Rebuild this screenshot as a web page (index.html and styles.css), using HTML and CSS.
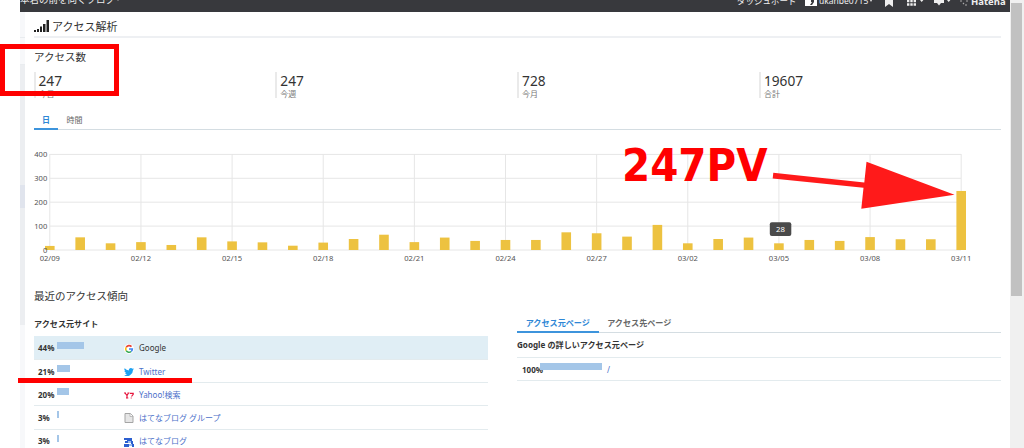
FILE: index.html
```html
<!DOCTYPE html>
<html lang="ja">
<head>
    <meta charset="UTF-8">
    <meta name="viewport" content="width=device-width, initial-scale=1.0">
    <title>アクセス解析</title>
    <link rel="stylesheet" href="styles.css">
</head>
<body>
    <div class="window">
        <div class="page">
            <!-- Global header -->
            <header class="global-header">
                <span class="blog-name">本君の前を向くブログ<i class="caret"></i></span>
                <nav class="global-menu">
                    <span class="dashboard">ダッシュボード</span>
                    <span class="user">
                        <svg class="user-icon" width="12" height="12" viewBox="0 0 12 12"><path d="M0 0H12V12H0Z" fill="#fff"/><path d="M2 0h3v6H2zM6 6h3v2L7 11H5l2-3H6z" fill="#38393d"/></svg>
                        <span>ukanbe0715<i class="caret"></i></span>
                    </span>
                    <svg class="bookmark" width="8" height="12" viewBox="0 0 8 12"><path d="M0 0H8V12L4 9L0 12Z" fill="#eee"/></svg>
                    <svg class="apps" width="17" height="12" viewBox="0 0 17 12"><path d="M0 1h2.4v2.6H0zM3.3 1h2.4v2.6H3.3zM6.6 1H9v2.6H6.6zM0 4.6h2.4v2.6H0zM3.3 4.6h2.4v2.6H3.3zM6.6 4.6H9v2.6H6.6zM0 8.2h2.4v2.6H0zM3.3 8.2h2.4v2.6H3.3zM6.6 8.2H9v2.6H6.6zM13 5h3.400l-1.700 2z" fill="#eee"/></svg>
                    <svg class="notice" width="17" height="12" viewBox="0 0 17 12"><path d="M0 0h10v8H7L5 10.500L3 8H0zM13 5h3.400l-1.700 2z" fill="#eee"/></svg>
                    <svg class="hatena-mark" width="10" height="12" viewBox="0 0 10 12"><path d="M0 6h2M3 9l1-1M6 6h2M5 10h2M8 4l2-1" stroke="#aaa" stroke-width="1.200"/></svg>
                    <span class="hatena">Hatena</span>
                </nav>
            </header>

            <div class="body">
                <aside class="sidebar">
                    <div class="side-light"></div>
                    <div class="side-mark"></div>
                    <div class="side-dark"></div>
                    <div class="side-current"></div>
                    <div class="side-dark side-rest"></div>
                </aside>

                <main class="main">
                    <h1 class="title">
                        <svg width="15" height="12" viewBox="0 0 15 12"><path d="M0 10h2v2H0zM3 9h2v3H3zM6 6.500h2v5.500H6zM9 4h2.500v8H9zM12.500 0H15v12h-2.500z" fill="#222"/></svg>
                        <span>アクセス解析</span>
                    </h1>

                    <section class="count">
                        <h2>アクセス数</h2>
                        <div class="stats">
                            <div class="stat"><div class="num">247</div><div class="label">今日</div></div>
                            <div class="stat"><div class="num">247</div><div class="label">今週</div></div>
                            <div class="stat"><div class="num">728</div><div class="label">今月</div></div>
                            <div class="stat"><div class="num">19607</div><div class="label">合計</div></div>
                        </div>
                    </section>

                    <div class="tabs day-tabs">
                        <span class="tab active">日</span>
                        <span class="tab">時間</span>
                    </div>

                    <svg class="chart" id="chart" width="967" height="146" viewBox="34 130 967 146"></svg>

                    <h2 class="trend-title">最近のアクセス傾向</h2>
                    <div class="trend">
                        <section class="sites">
                            <h3>アクセス元サイト</h3>
                            <div class="row selected">
                                <span class="rate">44%</span><span class="track"><span class="fill" style="width: 27px"></span></span>
                                <svg class="favicon" viewBox="-1 -1 12 12"><circle cx="5" cy="5" r="6" fill="#fff"/><g fill="none" stroke-width="1.900"><path d="M8 2.200A4 4 0 0 0 1.600 3" stroke="#ea4335"/><path d="M1.600 3a4 4 0 0 0 0 4" stroke="#fbbc05"/><path d="M1.600 7A4 4 0 0 0 7.600 8" stroke="#34a853"/><path d="M7.600 8A4 4 0 0 0 9 5H5" stroke="#4285f4"/></g></svg>
                                <span class="site">Google</span>
                            </div>
                            <div class="row">
                                <span class="rate">21%</span><span class="track"><span class="fill" style="width: 13px"></span></span>
                                <svg class="favicon" viewBox="0 0 24 24"><path d="M24 4.600a10 10 0 0 1-2.800.8 5 5 0 0 0 2.100-2.700 10 10 0 0 1-3.100 1.200 4.900 4.900 0 0 0-8.400 4.500A14 14 0 0 1 1.700 3.200a4.900 4.900 0 0 0 1.500 6.500 5 5 0 0 1-2.200-.6 4.900 4.900 0 0 0 3.900 4.900 5 5 0 0 1-2.200.1 4.900 4.900 0 0 0 4.600 3.400A10 10 0 0 1 0 19.500a14 14 0 0 0 21.500-12.400A10 10 0 0 0 24 4.600z" fill="#1da1f2"/></svg>
                                <span class="site link">Twitter</span>
                            </div>
                            <div class="row">
                                <span class="rate">20%</span><span class="track"><span class="fill" style="width: 12px"></span></span>
                                <svg class="favicon" viewBox="0 0 10 10"><path d="M0 3h2M3.500 3h2M1 3l2 2.500L4.500 3M3 5.500v2.500M2 8h2.300M6 3.300h3.200v1L7.500 6.500M6.700 8h1" fill="none" stroke="#e6143c" stroke-width="1.200"/></svg>
                                <span class="site link">Yahoo!検索</span>
                            </div>
                            <div class="row">
                                <span class="rate">3%</span><span class="track"><span class="fill" style="width: 2px"></span></span>
                                <svg class="favicon" viewBox="0 0 10 10"><path d="M1 .5h5.500L9 3v6.500H1z" fill="#e6e6e6" stroke="#a5a5a5"/><path d="M6 .5V3.500H9" fill="#fff" stroke="#a5a5a5" stroke-width=".7"/></svg>
                                <span class="site link">はてなブログ グループ</span>
                            </div>
                            <div class="row">
                                <span class="rate">3%</span><span class="track"><span class="fill" style="width: 2px"></span></span>
                                <svg class="favicon" viewBox="0 0 10 10"><path d="M0 1h3v2H0zM3 1h5v3H3zM1 4h3v2H1zM7 4h2v3H7zM0 7h5v3H0zM8 7h2v3H8z" fill="#2c5fd0"/><path d="M4 4h3v2H4zM5 7h3v2H5z" fill="#9dbbed"/></svg>
                                <span class="site link">はてなブログ</span>
                            </div>
                        </section>

                        <section class="pages">
                            <div class="tabs page-tabs">
                                <span class="tab active">アクセス元ページ</span>
                                <span class="tab">アクセス先ページ</span>
                            </div>
                            <h3>Google の詳しいアクセス元ページ</h3>
                            <div class="row">
                                <span class="rate">100%</span><span class="track"><span class="fill" style="width: 62px"></span></span>
                                <span class="site link">/</span>
                            </div>
                        </section>
                    </div>
                </main>
            </div>
        </div>
        <div class="scrollbar"><div class="thumb"></div></div>
    </div>

    <!-- Red marks over the page -->
    <div class="mark-box"></div>
    <div class="mark-line"></div>
    <svg class="mark-arrow" width="1024" height="448" viewBox="0 0 1024 448">
        <text x="622" y="181">247PV</text>
        <path d="M773.300 172.800L864.300 182.500L866.500 161.800L954.500 194.700L861.300 208.800L863.500 187.800L772.700 178.400Z"/>
    </svg>

    <script>
        // Page views per day, 02/09 - 03/11
        const views = [17, 53, 28, 33, 21, 53, 36, 32, 18, 31, 46, 64, 33, 52, 38, 42,
            42, 74, 70, 56, 105, 28, 46, 52, 28, 42, 38, 54, 45, 45, 247];
        const labels = ["02/09", "02/12", "02/15", "02/18", "02/21", "02/24",
            "02/27", "03/02", "03/05", "03/08", "03/11"];
        const left = 49.8;
        const bottom = 250;
        const step = 30.38;
        const scale = 0.239;

        let out = "";
        for (let v = 0; v <= 400; v += 100) {
            const y = bottom - v * scale;
            out += `<line class="grid" x1="${left}" x2="961" y1="${y}" y2="${y}"/>`;
        }
        labels.forEach((label, i) => {
            const x = left + i * step * 3;
            out += `<line class="grid" x1="${x}" x2="${x}" y1="154" y2="${bottom}"/>`;
            out += `<text class="day" x="${x}" y="261">${label}</text>`;
        });
        views.forEach((v, i) => {
            out += `<rect class="bar" x="${left + i * step - 4.800}" y="${bottom - v * scale}" width="9.600" height="${v * scale}"/>`;
        });
        for (let v = 0; v <= 400; v += 100) {
            out += `<text class="scale" x="47.300" y="${bottom - v * scale + 2.700}">${v}</text>`;
        }
        out += `<rect class="tip" x="769.800" y="222.300" width="21.500" height="13.700" rx="2"/>`;
        out += `<text class="tip-text" x="780.400" y="232">28</text>`;
        document.getElementById("chart").innerHTML = out;
    </script>
</body>
</html>
```
FILE: styles.css
```css
* {
    box-sizing: border-box;
}

body {
    margin: 0;
    height: 448px;
    overflow: hidden;
    position: relative;
    background: #fff;
    color: #333;
    font-family: "Noto Sans", "Noto Sans CJK JP", sans-serif;
    font-size: 8px;
}

h1, h2, h3 {
    margin: 0;
    font-weight: normal;
}

svg {
    display: block;
    flex: none;
}

.window {
    display: flex;
    height: 448px;
    padding-left: 20px;
}

.page {
    width: 990px;
    overflow: hidden;
}

/* === Header === */
.global-header {
    display: flex;
    justify-content: space-between;
    height: 12px;
    overflow: hidden;
    background: #38393d;
    color: #eee;
    white-space: nowrap;
}

.blog-name {
    margin-top: -6px;
    font-size: 9.5px;
    line-height: 12px;
}

.caret {
    display: inline-block;
    margin: 0 0 2px 2px;
    border: 1.5px solid transparent;
    border-top: 2px solid #eee;
    border-bottom: 0;
}

.global-menu {
    display: flex;
    width: 273px;
    line-height: 12px;
}

.global-menu svg {
    margin-top: -5px;
}

.dashboard {
    width: 68px;
    margin-top: -5px;
    font-size: 8.5px;
}

.user {
    display: flex;
    gap: 2px;
    width: 80px;
    font-size: 8.5px;
}

.user span {
    margin-top: -5px;
}

.global-menu .user-icon {
    margin-top: -6px;
}

.bookmark {
    margin-right: 14px;
}

.apps {
    margin-right: 10px;
}

.notice {
    margin-right: 9px;
}

.hatena-mark {
    margin-right: 1px;
}

.hatena {
    margin-top: -5px;
    font-size: 9.5px;
    font-weight: bold;
    line-height: 14px;
}

/* === Body === */
.body {
    display: flex;
    height: 436px;
}

.sidebar {
    width: 5px;
    background: #f7f8fa;
}

.side-light {
    height: 26px;
    border-bottom: 1px solid #e9ecef;
}

.side-mark {
    height: 27px;
    border-bottom: 1px solid #e9ecef;
}

.side-dark {
    height: 120px;
    background: #eceef1;
}

.side-current {
    height: 23px;
    background: #e0e4ed;
}

.side-rest {
    height: 117px;
}

.main {
    width: 985px;
    padding: 0 9px;
}

.title {
    display: flex;
    align-items: center;
    gap: 3px;
    height: 26px;
    padding-top: 4px;
    border-bottom: 2px solid #eef0f3;
    font-size: 11px;
}

.title svg {
    margin-top: -1px;
}

.count h2 {
    height: 34px;
    padding-top: 11px;
    font-size: 10.500px;
    line-height: 16px;
}

.stats {
    display: grid;
    grid-template-columns: repeat(4, 241.800px);
    height: 26px;
    margin-left: -.5px;
}

.stat {
    padding-left: 3px;
    border-left: 2px solid #eaeaea;
}

.num {
    height: 17px;
    font-size: 13.700px;
    line-height: 17px;
}

.label {
    color: #777;
    line-height: 9px;
}

.tabs {
    display: flex;
    border-bottom: 1px solid #d4dde2;
    color: #666;
}

.tab.active {
    border-bottom: 2px solid #3d94dc;
    color: #2e87d6;
    font-weight: bold;
}

.day-tabs {
    height: 20px;
    margin-top: 12px;
    line-height: 19px;
}

.day-tabs .tab {
    width: 24px;
    height: 20px;
    text-align: center;
}

.day-tabs .tab + .tab {
    width: 33px;
}

/* === Chart === */
.grid {
    stroke: #e6e6e6;
    stroke-width: 1;
}

.bar {
    fill: #edc240;
}

.day,
.scale {
    fill: #545454;
    font-size: 7.600px;
    text-anchor: middle;
}

.scale {
    text-anchor: end;
}

.tip {
    fill: #4a4a4a;
}

.tip-text {
    fill: #fff;
    font-size: 7.800px;
    text-anchor: middle;
}

/* === Trend === */
.trend-title {
    height: 40px;
    padding-top: 12px;
    font-size: 10.500px;
    line-height: 16px;
}

.trend {
    display: grid;
    grid-template-columns: 454px 484px;
    column-gap: 29px;
}

h3 {
    font-size: 8.100px;
    font-weight: bold;
}

.sites h3 {
    height: 20px;
    line-height: 15px;
}

.row {
    display: flex;
    align-items: center;
    height: 23.200px;
    padding-left: 5px;
    border-bottom: 1px solid #e3ebee;
}

.sites .row {
    padding-left: 4px;
}

.selected {
    height: 24px;
    background: #e0eef5;
}

.rate {
    width: 18px;
    font-weight: bold;
}

.sites .rate {
    width: 19px;
}

.track {
    width: 67px;
    height: 7px;
    margin-top: -5px;
}

.fill {
    display: block;
    height: 7px;
    background: #a4c6e8;
}

.favicon {
    width: 10px;
    height: 10px;
    margin: 2px 5px 0 0;
}

.link {
    color: #4b6fc9;
}

.page-tabs {
    height: 17px;
    line-height: 13px;
}

.page-tabs .tab {
    width: 81.500px;
    height: 17px;
    text-align: center;
    font-size: 8.100px;
    font-weight: bold;
}

.pages h3 {
    height: 25px;
    border-bottom: 1px solid #e3ebee;
    line-height: 24px;
}

/* === Scrollbar === */
.scrollbar {
    width: 14px;
    padding: 3px 2px 0 1px;
    background: #f0f0f0;
}

.thumb {
    height: 293px;
    background: #c1c1c1;
}

/* === Red marks === */
.mark-box {
    position: absolute;
    left: 0;
    top: 44px;
    width: 119px;
    height: 52px;
    border: 5px solid #f00;
}

.mark-line {
    position: absolute;
    left: 18px;
    top: 378px;
    width: 174px;
    height: 5px;
    background: #f00;
}

.mark-arrow {
    position: absolute;
    left: 0;
    top: 0;
    fill: #ff1a1a;
}

.mark-arrow text {
    fill: #f00;
    font-family: "DejaVu Sans Condensed", "DejaVu Sans", sans-serif;
    font-size: 45px;
    font-stretch: condensed;
    font-weight: bold;
}
```
